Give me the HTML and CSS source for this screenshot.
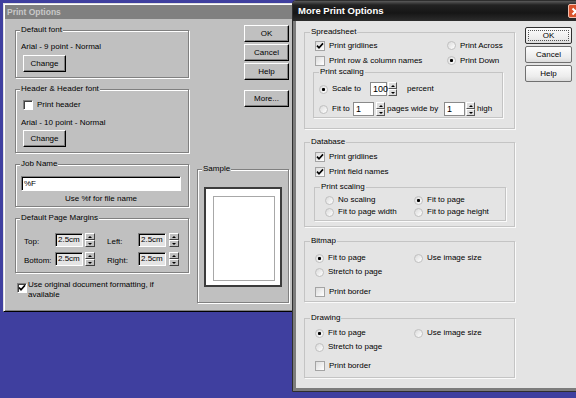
FILE: index.html
```html
<!DOCTYPE html>
<html lang="en">
<head>
    <meta charset="UTF-8">
    <title>Print Options</title>
    <link rel="stylesheet" href="styles.css">
</head>
<body>
    <!-- Print Options (inactive, classic look) -->
    <div class="window classic">
        <div class="title">Print Options</div>
        <div class="pane">
            <div class="main-col">
                <fieldset class="group font-group">
                    <legend>Default font</legend>
                    <div class="line">Arial - 9 point - Normal</div>
                    <button class="btn change">Change</button>
                </fieldset>
                <fieldset class="group header-group">
                    <legend>Header &amp; Header font</legend>
                    <div class="check"><span class="box"></span>Print header</div>
                    <div class="line gap7">Arial - 10 point - Normal</div>
                    <button class="btn change tight">Change</button>
                </fieldset>
                <fieldset class="group job-group">
                    <legend>Job Name</legend>
                    <div class="field job-input">%F</div>
                    <div class="hint">Use %f for file name</div>
                </fieldset>
                <fieldset class="group margin-group">
                    <legend>Default Page Margins</legend>
                    <div class="margin-row">
                        <span class="m-label">Top:</span>
                        <span class="field m-input">2.5cm</span>
                        <span class="spin"><i class="up"></i><i class="dn"></i></span>
                        <span class="m-label second">Left:</span>
                        <span class="field m-input">2.5cm</span>
                        <span class="spin wide"><i class="up"></i><i class="dn"></i></span>
                    </div>
                    <div class="margin-row">
                        <span class="m-label">Bottom:</span>
                        <span class="field m-input">2.5cm</span>
                        <span class="spin"><i class="up"></i><i class="dn"></i></span>
                        <span class="m-label second">Right:</span>
                        <span class="field m-input">2.5cm</span>
                        <span class="spin wide"><i class="up"></i><i class="dn"></i></span>
                    </div>
                </fieldset>
                <div class="check original">
                    <span class="box"><svg width="8" height="8" viewBox="0 0 8 8"><path d="M1 3.5 L3 5.8 L7 1.2" fill="none" stroke="#000" stroke-width="1.7"/></svg></span>
                    <span>Use original document formatting, if<br>available</span>
                </div>
            </div>
            <div class="side-col">
                <button class="btn side">OK</button>
                <button class="btn side">Cancel</button>
                <button class="btn side">Help</button>
                <button class="btn side more">More...</button>
                <fieldset class="group sample-group">
                    <legend>Sample</legend>
                    <div class="sample-page"><div class="sample-inner"></div></div>
                </fieldset>
            </div>
        </div>
    </div>

    <!-- More Print Options (active) -->
    <div class="window xp">
        <div class="xp-title">
            <span>More Print Options</span>
            <span class="close"><svg width="13" height="13" viewBox="0 0 13 13"><path d="M3.5 3.5 L9.5 9.5 M9.5 3.5 L3.5 9.5" stroke="#fff" stroke-width="2"/></svg></span>
        </div>
        <div class="xp-pane">
            <div class="xp-main">
                <fieldset class="xgroup sheet">
                    <legend>Spreadsheet</legend>
                    <div class="sheet-top">
                        <div class="xrow"><span class="cb"><svg width="8" height="8" viewBox="0 0 8 8"><path d="M1 3.6 L3 5.8 L7 1.4" fill="none" stroke="#000" stroke-width="1.6"/></svg></span>Print gridlines</div>
                        <div class="xrow"><span class="rb"></span>Print Across</div>
                        <div class="xrow"><span class="cb"></span>Print row &amp; column names</div>
                        <div class="xrow"><span class="rb on"></span>Print Down</div>
                    </div>
                    <fieldset class="xgroup sub sheet-scale">
                        <legend>Print scaling</legend>
                        <div class="xrow tall"><span class="rb on"></span><span class="lbl-scale">Scale to</span><span class="xin w16">100</span><span class="spin xspin"><i class="up"></i><i class="dn"></i></span><span class="after">percent</span></div>
                        <div class="xrow tall second"><span class="rb"></span><span class="lbl-fit">Fit to</span><span class="xin w21">1</span><span class="spin xspin gap2"><i class="up"></i><i class="dn"></i></span><span class="lbl-pages">pages wide by</span><span class="xin w21">1</span><span class="spin xspin"><i class="up"></i><i class="dn"></i></span><span class="high">high</span></div>
                    </fieldset>
                </fieldset>

                <fieldset class="xgroup db">
                    <legend>Database</legend>
                    <div class="xrow"><span class="cb"><svg width="8" height="8" viewBox="0 0 8 8"><path d="M1 3.6 L3 5.8 L7 1.4" fill="none" stroke="#000" stroke-width="1.6"/></svg></span>Print gridlines</div>
                    <div class="xrow"><span class="cb"><svg width="8" height="8" viewBox="0 0 8 8"><path d="M1 3.6 L3 5.8 L7 1.4" fill="none" stroke="#000" stroke-width="1.6"/></svg></span>Print field names</div>
                    <fieldset class="xgroup sub db-scale">
                        <legend>Print scaling</legend>
                        <div class="two-col narrow">
                            <div class="xrow short"><span class="rb"></span>No scaling</div>
                            <div class="xrow short"><span class="rb on"></span>Fit to page</div>
                            <div class="xrow short"><span class="rb"></span>Fit to page width</div>
                            <div class="xrow short"><span class="rb"></span>Fit to page height</div>
                        </div>
                    </fieldset>
                </fieldset>

                <fieldset class="xgroup bitmap">
                    <legend>Bitmap</legend>
                    <div class="two-col">
                        <div class="xrow mid"><span class="rb on"></span>Fit to page</div>
                        <div class="xrow mid"><span class="rb"></span>Use image size</div>
                        <div class="xrow mid"><span class="rb"></span>Stretch to page</div>
                    </div>
                    <div class="xrow mid border-row"><span class="cb"></span>Print border</div>
                </fieldset>

                <fieldset class="xgroup drawing">
                    <legend>Drawing</legend>
                    <div class="two-col">
                        <div class="xrow mid"><span class="rb on"></span>Fit to page</div>
                        <div class="xrow mid"><span class="rb"></span>Use image size</div>
                        <div class="xrow mid"><span class="rb"></span>Stretch to page</div>
                    </div>
                    <div class="xrow mid border-row"><span class="cb"></span>Print border</div>
                </fieldset>
            </div>
            <div class="xp-side">
                <button class="xbtn default"><span>OK</span></button>
                <button class="xbtn">Cancel</button>
                <button class="xbtn">Help</button>
            </div>
        </div>
    </div>
</body>
</html>
```

FILE: styles.css
```css
body {
    margin: 0;
    width: 576px;
    height: 398px;
    overflow: hidden;
    background-color: #3f3f9f;
    font-family: "Liberation Sans", Arial, sans-serif;
    font-size: 8px;
    line-height: 10px;
    color: #000;
}
.window {
    position: absolute;
    box-sizing: border-box;
}

/* classic window */
.classic {
    left: 3px;
    top: 3px;
    width: 300px;
    height: 309px;
    padding: 1px;
    background-color: #c0c0c0;
    border: 1px solid;
    border-color: #dfdfdf #000 #000 #dfdfdf;
    box-shadow: inset 1px 1px #fff, inset -1px -1px #808080;
}
.classic .title {
    height: 14px;
    padding-left: 2px;
    background-color: #808080;
    color: #c8c8c8;
    font-weight: bold;
    font-size: 8.5px;
    line-height: 14px;
}
.pane {
    display: flex;
    gap: 8px;
    padding: 6px 0 0 10px;
}
.main-col {
    width: 174px;
    display: flex;
    flex-direction: column;
}
.side-col {
    width: 92px;
    display: flex;
    flex-direction: column;
    align-items: flex-end;
    gap: 2px;
}
.group {
    margin: 0;
    padding: 0 0 0 5px;
    min-width: 0;
    border: 1px solid #808080;
    box-shadow: 1px 1px 0 #fff, inset 1px 1px 0 #fff;
}
.group legend {
    padding: 0 1px;
    margin-left: -1px;
    line-height: 10px;
    background-color: #c0c0c0;
}
.font-group {
    padding-top: 7px;
    padding-bottom: 5px;
}
.header-group {
    margin-top: 6px;
    padding-top: 5px;
    padding-bottom: 5px;
}
.job-group {
    margin-top: 6px;
    padding-top: 7px;
    padding-bottom: 2px;
}
.margin-group {
    margin-top: 6px;
    padding-top: 10px;
    padding-bottom: 6px;
}
.line {
    height: 10px;
}
.gap7 {
    margin-top: 7px;
}
.btn {
    display: block;
    box-sizing: border-box;
    height: 17px;
    padding: 0;
    font: inherit;
    color: #000;
    background-color: #c0c0c0;
    border: 1px solid;
    border-color: #fff #000 #000 #fff;
    box-shadow: inset -1px -1px #808080;
}
.change {
    width: 43px;
    margin: 3px 0 0 2px;
}
.change.tight {
    margin-top: 2px;
}
.side {
    width: 45px;
}
.more {
    margin-top: 8px;
}
.check {
    display: flex;
    align-items: center;
    height: 12px;
    margin-left: 2px;
    gap: 4px;
}
.box {
    box-sizing: border-box;
    width: 10px;
    height: 10px;
    flex: none;
    display: flex;
    align-items: center;
    justify-content: center;
    background-color: #fff;
    border: 1px solid;
    border-color: #808080 #fff #fff #808080;
    box-shadow: inset 1px 1px #404040;
}
.check.original {
    align-items: flex-start;
    height: auto;
    margin-top: 7px;
    gap: 1px;
}
.check.original .box {
    margin-top: 3px;
}
.field {
    box-sizing: border-box;
    background-color: #fff;
    border: 1px solid;
    border-color: #808080 #fff #fff #808080;
    box-shadow: inset 1px 1px #000;
    padding-left: 2px;
}
.job-input {
    width: 160px;
    height: 15px;
    line-height: 13px;
}
.hint {
    width: 160px;
    margin-top: 3px;
    text-align: center;
}
.margin-row {
    display: flex;
    align-items: center;
    height: 14px;
    margin-left: 3px;
}
.margin-row + .margin-row {
    margin-top: 5px;
}
.m-label {
    width: 31px;
    padding-top: 3px;
}
.m-label.second {
    margin-left: 12px;
}
.m-input {
    width: 28px;
    height: 14px;
    line-height: 12px;
    background-color: #e4e4e4;
}
.spin {
    display: flex;
    flex-direction: column;
    width: 10px;
    height: 14px;
    margin-left: 2px;
}
.spin.wide {
    margin-left: 3px;
}
.spin i {
    flex: 1;
    display: flex;
    align-items: center;
    justify-content: center;
    box-sizing: border-box;
    background-color: #c0c0c0;
    border: 1px solid;
    border-color: #fff #404040 #404040 #fff;
}
.spin i::after {
    content: "";
    border-left: 2px solid transparent;
    border-right: 2px solid transparent;
}
.spin .up::after {
    border-bottom: 2px solid #000;
}
.spin .dn::after {
    border-top: 2px solid #000;
}
.sample-group {
    align-self: stretch;
    margin-top: 55px;
    padding: 13px 0 15px 6px;
}
.sample-group legend {
    margin-left: -2px;
}
.sample-page {
    box-sizing: border-box;
    width: 78px;
    height: 100px;
    padding: 7px 0 0 7px;
    background-color: #fff;
    border: 2px solid #3c3c3c;
}
.sample-inner {
    width: 60px;
    height: 83px;
    border: 1px solid #a8a8a8;
}

/* active window */
.xp {
    left: 292px;
    top: 0;
    width: 294px;
    height: 392px;
    padding: 0 3px 2px;
    background-color: #7c7c7c;
    border: 1px solid #2e2e2e;
    border-radius: 4px 4px 0 0;
}
.xp-title {
    display: flex;
    align-items: center;
    justify-content: space-between;
    height: 20px;
    margin: 0 -3px;
    padding: 0 2px 0 5px;
    background: linear-gradient(#5a5a5a, #222 4px, #161616 60%, #2c2c2c);
    border-radius: 3px 3px 0 0;
    color: #fff;
    font-weight: bold;
    font-size: 9.5px;
}
.close {
    display: flex;
    width: 15px;
    height: 14px;
    box-sizing: border-box;
    align-items: center;
    justify-content: center;
    background-color: #d9532c;
    border: 1px solid #f0c0b0;
    border-radius: 2px;
}
.xp-pane {
    box-sizing: border-box;
    display: flex;
    gap: 10px;
    height: 367px;
    padding: 6px 0 0 8px;
    background-color: #e4e4e4;
}
.xp-main {
    width: 211px;
    display: flex;
    flex-direction: column;
}
.xp-side {
    display: flex;
    flex-direction: column;
    gap: 2px;
}
.xgroup {
    margin: 0;
    padding: 0 0 0 10px;
    min-width: 0;
    border: 1px solid #c4c4c4;
    box-shadow: 1px 1px 0 #fafafa;
}
.xgroup legend {
    padding: 0 1px;
    margin-left: -5px;
    line-height: 10px;
}
.xrow {
    display: flex;
    align-items: center;
    height: 15px;
    gap: 4px;
    white-space: nowrap;
}
.cb {
    box-sizing: border-box;
    width: 10px;
    height: 10px;
    flex: none;
    display: flex;
    align-items: center;
    justify-content: center;
    border: 1px solid #a4a4a4;
    background: linear-gradient(135deg, #dcdcdc, #fff);
}
.rb {
    box-sizing: border-box;
    width: 9px;
    height: 9px;
    flex: none;
    border-radius: 50%;
    border: 1px solid #c0c0c0;
    background: linear-gradient(135deg, #dadada, #fff);
}
.rb.on {
    background: radial-gradient(circle, #000 0 1.3px, transparent 1.8px), linear-gradient(135deg, #dadada, #fff);
}
.sheet {
    padding-top: 1px;
    padding-bottom: 10px;
}
.sheet-top {
    display: grid;
    grid-template-columns: 132px auto;
}
.sub {
    padding-left: 5px;
}
.sub legend {
    margin-left: 0;
}
.sheet-scale {
    width: 190px;
    box-sizing: border-box;
    margin: -1px 0 0 -2px;
    padding-top: 5px;
    padding-bottom: 1px;
}
.xrow.tall {
    height: 14px;
    gap: 0;
}
.xrow.tall .rb {
    margin-right: 4px;
}
.xrow.tall.second {
    margin-top: 6px;
}
.xin {
    box-sizing: border-box;
    height: 14px;
    padding-left: 2px;
    line-height: 12px;
    font-size: 9px;
    background-color: #fff;
    border: 1px solid #8a8a8a;
}
.w16 {
    width: 17px;
}
.w21 {
    width: 21px;
}
.lbl-scale {
    width: 38px;
}
.lbl-fit {
    width: 21px;
}
.lbl-pages {
    width: 57px;
    margin-left: 2px;
}
.after {
    margin-left: 10px;
}
.high {
    margin-left: 2px;
}
.xspin {
    width: 9px;
    margin-left: 1px;
}
.xspin.gap2 {
    margin-left: 2px;
}
.xspin i {
    background-color: #dedede;
    border-color: #fff #555 #555 #fff;
}
.db {
    margin-top: 8px;
    padding-top: 2px;
    padding-bottom: 5px;
}
.db-scale {
    width: 192px;
    box-sizing: border-box;
    margin: 3px 0 0 -1px;
    padding: 2px 0 2px 10px;
}
.db-scale legend {
    margin-left: -5px;
}
.two-col {
    display: grid;
    grid-template-columns: 99px auto;
}
.two-col.narrow {
    grid-template-columns: 89px auto;
}
.xrow.short {
    height: 12px;
}
.xrow.mid {
    height: 14px;
}
.bitmap {
    margin-top: 9px;
    padding-top: 5px;
    padding-bottom: 2px;
}
.drawing {
    margin-top: 11px;
    padding-top: 3px;
    padding-bottom: 4px;
}
.bitmap .border-row {
    margin-top: 6px;
}
.drawing .border-row {
    margin-top: 5px;
}
.xbtn {
    box-sizing: border-box;
    width: 47px;
    height: 17px;
    padding: 0;
    font: inherit;
    color: #000;
    background: linear-gradient(#fdfdfd, #ececec 70%, #dcdcdc);
    border: 1px solid #707070;
    border-radius: 2px;
}
.xbtn.default {
    border-color: #303030;
    padding: 2px;
}
.xbtn.default span {
    display: block;
    height: 100%;
    box-sizing: border-box;
    line-height: 9px;
    border: 1px dotted #555;
}
```
